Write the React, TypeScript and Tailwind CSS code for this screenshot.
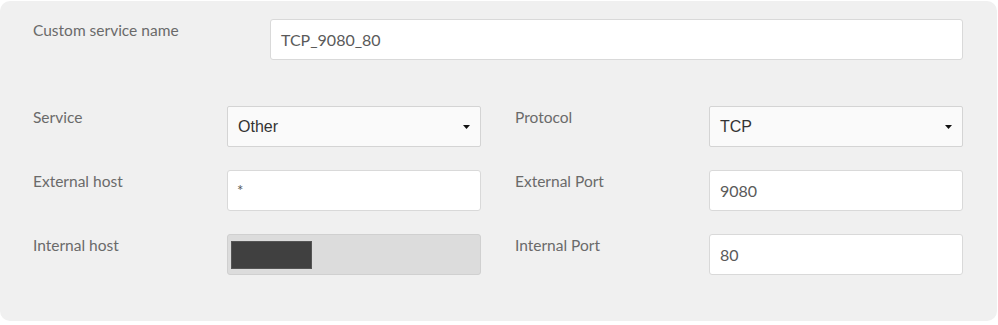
const font = { fontFamily: "Lato, 'Noto Sans', sans-serif" };

function Label({ children }: { children: React.ReactNode }) {
  return <div className="pt-px text-[15.5px] leading-[20px] text-[#6a6a6a]">{children}</div>;
}

function TextBox({ value }: { value: string }) {
  return (
    <div className="flex h-[41px] items-center rounded-[3px] border border-[#d9d9d9] bg-white pl-[10px] text-[16px] text-[#5a5a5a]">
      {value}
    </div>
  );
}

function SelectBox({ value }: { value: string }) {
  return (
    <div className="flex h-[41px] items-center justify-between rounded-[2px] border border-[#d4d4d4] bg-[#fafafa] pl-[10px] pr-[10px] text-[16px] text-[#333] [font-family:'Liberation_Sans',Arial,sans-serif]">
      <span>{value}</span>
      <svg width="7" height="4" viewBox="0 0 7 4">
        <path d="M0 0H7L3.5 4Z" fill="#111" />
      </svg>
    </div>
  );
}

export default function App() {
  return (
    <div className="bg-white" style={font}>
      <div className="mt-px h-[320px] w-[997px] rounded-[10px] bg-[#f0f0f0] pl-[33px] pr-[34px] pt-[18px]">
        <div className="flex">
          <div className="w-[237px]">
            <Label>Custom service name</Label>
          </div>
          <div className="flex-1">
            <TextBox value="TCP_9080_80" />
          </div>
        </div>

        <div className="mt-[46px] grid grid-cols-[194px_254px_34px_194px_254px] gap-y-[23px]">
          <Label>Service</Label>
          <SelectBox value="Other" />
          <div />
          <Label>Protocol</Label>
          <SelectBox value="TCP" />

          <Label>External host</Label>
          <div className="flex h-[41px] items-start rounded-[3px] border border-[#d9d9d9] bg-white pl-[9px] pt-[12px] text-[15px] leading-[15px] text-[#555]">
            *
          </div>
          <div />
          <Label>External Port</Label>
          <TextBox value="9080" />

          <Label>Internal host</Label>
          <div className="flex h-[41px] items-center rounded-[3px] border border-[#d0d0d0] bg-[#dcdcdc] pl-[3px]">
            <div className="h-[28px] w-[81px] border border-[#555] bg-[#404040]" />
          </div>
          <div />
          <Label>Internal Port</Label>
          <TextBox value="80" />
        </div>
      </div>
    </div>
  );
}
